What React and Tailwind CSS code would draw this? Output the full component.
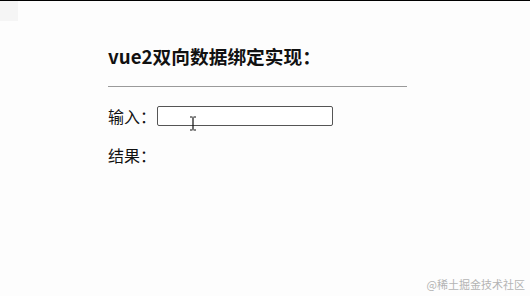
import React from 'react'

const font = { fontFamily: '"Noto Sans CJK SC", "Noto Sans", sans-serif' }

class App extends React.Component {
  state = {
    text: ''
  }

  onChange = (e) => {
    this.setState({ text: e.target.value })
  }

  render() {
    return (
      <div className="relative w-[530px] h-[296px] overflow-hidden bg-[#fdfdfd] border-t border-black text-[#111]"
           style={font}>
        <div className="absolute left-0 top-0 w-[18px] h-[20px] bg-[#f5f5f5]" />
        <div className="flex flex-col pl-[108px]">
          <h3 className="mt-[43px] text-[18.72px] leading-[24px] font-bold">vue2双向数据绑定实现：</h3>
          <hr className="mt-[18px] w-[299px] border-t border-[#9a9a9a]" />
          <div className="mt-[19px] h-[20px] flex items-center text-[16px]">
            <span>输入：</span>
            <div className="relative ml-[1px]">
              <input value={this.state.text} onChange={this.onChange}
                     className="block w-[176px] h-[20px] border border-[#555] rounded-[2px] bg-white outline-none px-1 text-[13px]" />
              <svg className="absolute left-[32px] top-[10px]" width="8" height="15" viewBox="0 0 8 15">
                <path d="M1 1h2.5M4.5 1H7M4 1.5v12M1 14h2.5M4.5 14H7" stroke="#111" strokeWidth="1.2" fill="none" />
              </svg>
            </div>
          </div>
          <div className="mt-[19px] text-[16px] leading-[20px]">结果：{this.state.text}</div>
        </div>
        <div className="absolute right-[5px] bottom-[5px] text-[11px] leading-[14px] text-[#b4b4b4]">@稀土掘金技术社区</div>
      </div>
    )
  }
}

export default App
